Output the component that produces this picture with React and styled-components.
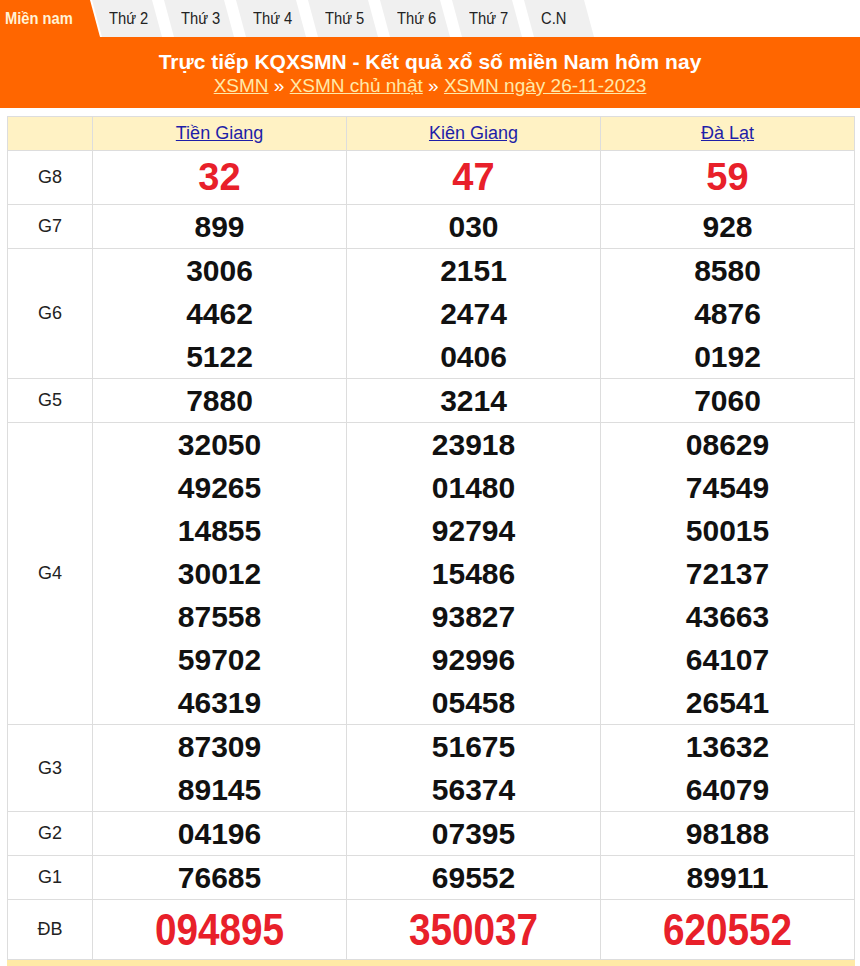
import React from "react";
import styled, { createGlobalStyle } from "styled-components";

const Global = createGlobalStyle`
  html, body { margin: 0; padding: 0; background: #fff; }
  body { font-family: "Liberation Sans", Arial, sans-serif; }
`;

const Page = styled.div`
  width: 860px;
`;

const TabBar = styled.div`
  display: flex;
  height: 37px;
  align-items: stretch;
`;

const Tab = styled.div`
  display: flex;
  align-items: center;
  box-sizing: border-box;
  font-size: 16px;
  ${(p) =>
    p.$active
      ? `
    width: 100px;
    padding-left: 5px;
    background: #ff6600;
    color: #fff3d6;
    font-weight: bold;
    clip-path: polygon(0 0, 90px 0, 100% 100%, 0 100%);
  `
      : `
    width: 70px;
    margin-left: 2px;
    padding-left: 17px;
    background: #f0f0f0;
    color: #222;
    clip-path: polygon(0 0, 60px 0, 100% 100%, 10px 100%);
  `}
  &:nth-child(2) { margin-left: -8px; }
`;

const Label15 = styled.span`
  display: inline-block;
  transform: scaleX(0.92);
  transform-origin: left center;
`;

const Header = styled.div`
  background: #ff6600;
  height: 71px;
  box-sizing: border-box;
  padding-top: 12px;
  text-align: center;
`;

const Title = styled.h1`
  margin: 0;
  font-size: 21px;
  line-height: 25px;
  font-weight: bold;
  color: #fff;
`;

const Crumbs = styled.div`
  font-size: 19px;
  line-height: 23px;
  color: #fff;
`;

const Crumb = styled.a`
  color: #ffe9a8;
  text-decoration: underline;
`;

const Table = styled.table`
  margin: 8px 5px 0 7px;
  width: 848px;
  border-collapse: collapse;
  border: 1px solid #dddddd;
  table-layout: fixed;
`;

const Th = styled.th`
  background: #fff2c4;
  border: 1px solid #dddddd;
  height: 33px;
  font-weight: normal;
  font-size: 18px;
  padding: 0;
`;

const Province = styled.a`
  color: #1e1ea8;
  text-decoration: underline;
`;

const Label = styled.td`
  border: 1px solid #dddddd;
  text-align: center;
  font-size: 18px;
  color: #222;
  padding: 0;
`;

const Cell = styled.td`
  border: 1px solid #dddddd;
  text-align: center;
  padding: 0;
`;

const Num = styled.div`
  font-weight: bold;
  font-size: ${(p) => (p.$big ? "38px" : "30px")};
  line-height: ${(p) => p.$lh || 43}px;
  color: ${(p) => (p.$red ? "#e8202a" : "#111")};
`;

const Special = styled.div`
  font-weight: bold;
  font-size: 45px;
  line-height: 59px;
  color: #e8202a;
  transform: scaleX(0.86);
`;

const Footer = styled.div`
  margin: 0 5px 0 7px;
  height: 8px;
  background: #ffeaa6;
`;

const tabs = ["Thứ 2", "Thứ 3", "Thứ 4", "Thứ 5", "Thứ 6", "Thứ 7", "C.N"];
const provinces = ["Tiền Giang", "Kiên Giang", "Đà Lạt"];

const rows = [
  { g: "G8", red: true, big: true, lh: 53, d: [["32"], ["47"], ["59"]] },
  { g: "G7", d: [["899"], ["030"], ["928"]] },
  {
    g: "G6",
    d: [
      ["3006", "4462", "5122"],
      ["2151", "2474", "0406"],
      ["8580", "4876", "0192"],
    ],
  },
  { g: "G5", d: [["7880"], ["3214"], ["7060"]] },
  {
    g: "G4",
    d: [
      ["32050", "49265", "14855", "30012", "87558", "59702", "46319"],
      ["23918", "01480", "92794", "15486", "93827", "92996", "05458"],
      ["08629", "74549", "50015", "72137", "43663", "64107", "26541"],
    ],
  },
  {
    g: "G3",
    d: [
      ["87309", "89145"],
      ["51675", "56374"],
      ["13632", "64079"],
    ],
  },
  { g: "G2", d: [["04196"], ["07395"], ["98188"]] },
  { g: "G1", d: [["76685"], ["69552"], ["89911"]] },
];

const special = ["094895", "350037", "620552"];

export default function App() {
  return (
    <Page>
      <Global />
      <TabBar>
        <Tab $active>
          <Label15>Miền nam</Label15>
        </Tab>
        {tabs.map((t) => (
          <Tab key={t}>
            <Label15>{t}</Label15>
          </Tab>
        ))}
      </TabBar>
      <Header>
        <Title>Trực tiếp KQXSMN - Kết quả xổ số miền Nam hôm nay</Title>
        <Crumbs>
          <Crumb>XSMN</Crumb> » <Crumb>XSMN chủ nhật</Crumb> »{" "}
          <Crumb>XSMN ngày 26-11-2023</Crumb>
        </Crumbs>
      </Header>
      <Table>
        <colgroup>
          <col style={{ width: 85 }} />
          <col />
          <col />
          <col />
        </colgroup>
        <thead>
          <tr>
            <Th />
            {provinces.map((p) => (
              <Th key={p}>
                <Province>{p}</Province>
              </Th>
            ))}
          </tr>
        </thead>
        <tbody>
          {rows.map((r) => (
            <tr key={r.g}>
              <Label>{r.g}</Label>
              {r.d.map((nums, i) => (
                <Cell key={i}>
                  {nums.map((n, j) => (
                    <Num key={j} $red={r.red} $big={r.big} $lh={r.lh}>
                      {n}
                    </Num>
                  ))}
                </Cell>
              ))}
            </tr>
          ))}
          <tr>
            <Label>ĐB</Label>
            {special.map((s) => (
              <Cell key={s}>
                <Special>{s}</Special>
              </Cell>
            ))}
          </tr>
        </tbody>
      </Table>
      <Footer />
    </Page>
  );
}
